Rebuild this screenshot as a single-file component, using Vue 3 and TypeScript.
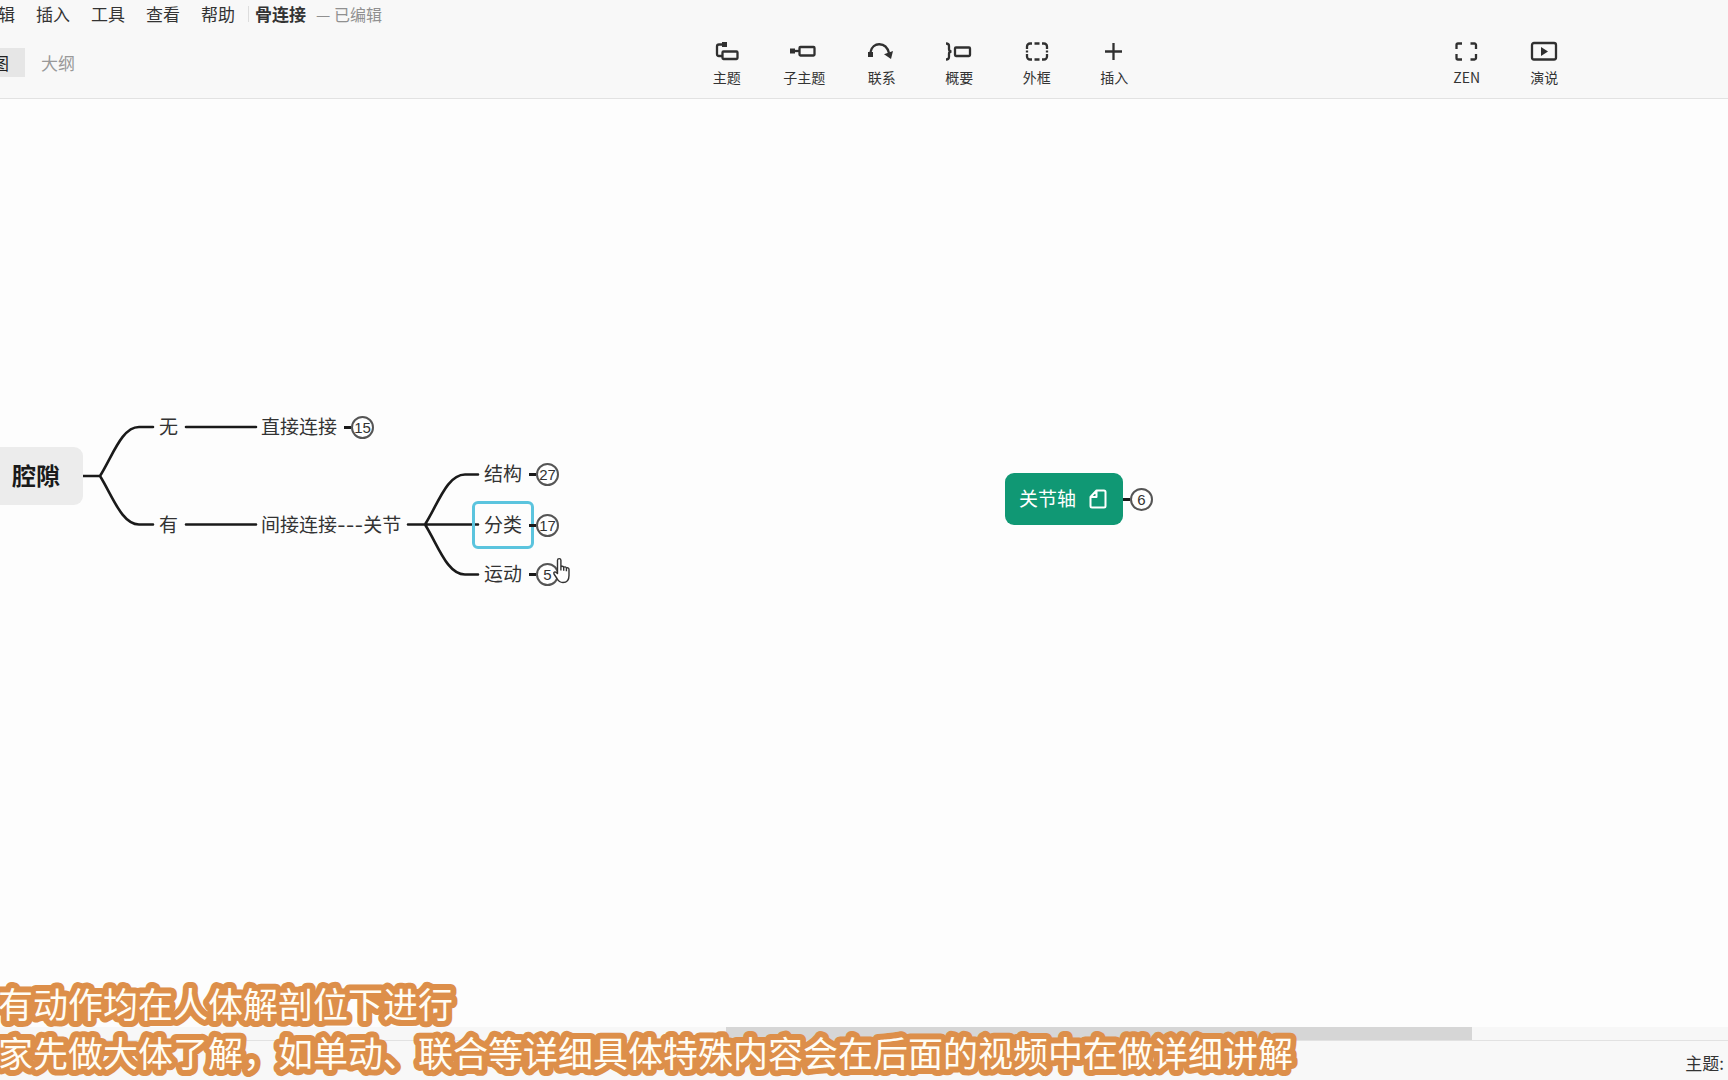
<script setup lang="ts">
interface Topic {
  text: string
  x: number
  y: number
  count?: number
  selected?: boolean
}

const menus: string[] = ['辑', '插入', '工具', '查看', '帮助']

// x is the left edge of the text, y the vertical centre, both in canvas pixels
const topics: Topic[] = [
  { text: '无', x: 159, y: 328 },
  { text: '直接连接', x: 261, y: 328, count: 15 },
  { text: '有', x: 159, y: 426 },
  { text: '间接连接---关节', x: 261, y: 426 },
  { text: '结构', x: 484, y: 375, count: 27 },
  { text: '分类', x: 484, y: 426, count: 17, selected: true },
  { text: '运动', x: 484, y: 475, count: 5 },
]

const captions: string[] = [
  '有动作均在人体解剖位下进行',
  '家先做大体了解，如单动、联合等详细具体特殊内容会在后面的视频中在做详细讲解',
]
</script>

<template>
  <div class="app">
    <header class="header">
      <nav class="menubar">
        <button v-for="m in menus" :key="m" type="button" class="menu">{{ m }}</button>
        <span class="divider"></span>
        <h1 class="title">骨连接</h1>
        <span class="state">— 已编辑</span>
      </nav>
      <div class="tools">
        <div class="tabs">
          <button type="button" class="tab active">图</button>
          <button type="button" class="tab">大纲</button>
        </div>
        <div class="group main-group">
          <button type="button" class="tool">
            <svg viewBox="0 0 32 24"><rect class="solid" x="11" y="2" width="5" height="5" /><path d="M12 4.500H8a2 2 0 0 0-2 2V14a2 2 0 0 0 2 2h3" /><rect x="11.500" y="11.500" width="15" height="7.500" rx="1" /></svg>
            <span>主题</span>
          </button>
          <button type="button" class="tool">
            <svg viewBox="0 0 32 24"><rect class="solid" x="2" y="8.500" width="5" height="5" /><path d="M6 11h5" /><rect x="11.500" y="7" width="15" height="8.500" rx="1" /></svg>
            <span>子主题</span>
          </button>
          <button type="button" class="tool">
            <svg viewBox="0 0 32 24"><rect class="solid" x="2" y="12" width="5" height="5" /><path d="M4.500 12C6.500 1.500 20 1.500 23 13" /><path class="solid" d="M18 14.300 27 11 25 19Z" /></svg>
            <span>联系</span>
          </button>
          <button type="button" class="tool">
            <svg viewBox="0 0 32 24"><path d="M3 3.500c2.500 0 3 .8 3 2.500v3c0 1.500.8 2.500 2.500 2.500-1.700 0-2.500 1-2.500 2.500v3c0 1.700-.5 2.500-3 2.500" /><rect x="12" y="7.500" width="15" height="8.500" rx="1" /></svg>
            <span>概要</span>
          </button>
          <button type="button" class="tool">
            <svg viewBox="0 0 32 24"><path d="M11 3.500H9a3 3 0 0 0-3 3V9M21 3.500h2a3 3 0 0 1 3 3V9M11 19.500H9a3 3 0 0 1-3-3V14M21 19.500h2a3 3 0 0 0 3-3V14M13.500 3.500h5M13.500 19.500h5M6 10.500v2M26 10.500v2" /></svg>
            <span>外框</span>
          </button>
          <button type="button" class="tool">
            <svg viewBox="0 0 32 24"><path d="M7 11.500h17M15.500 3v17" /></svg>
            <span>插入</span>
          </button>
        </div>
        <div class="group side-group">
          <button type="button" class="tool">
            <svg viewBox="0 0 32 24"><path d="M11 3.500H7A1.500 1.500 0 0 0 5.500 5v4M19.500 3.500h4A1.500 1.500 0 0 1 25 5v4M11 19.500H7A1.500 1.500 0 0 1 5.500 18v-4M19.500 19.500h4a1.500 1.500 0 0 0 1.500-1.500v-4" /></svg>
            <span>ZEN</span>
          </button>
          <button type="button" class="tool">
            <svg viewBox="0 0 32 24"><rect x="4" y="3" width="24" height="16.500" rx="2" /><path class="solid" d="M13 7v9l7-4.500z" /></svg>
            <span>演说</span>
          </button>
        </div>
      </div>
    </header>

    <main class="canvas">
      <svg class="links" width="1200" height="600" viewBox="0 0 1200 600">
        <path d="M83 377H100C113 356 122 328 139 328H153M100 377C113 398 122 425.500 139 425.500H153" />
        <path d="M186 328H256M186 425.500H256" />
        <path d="M408 425.500H425C438 405 447 375.500 465 375.500H478M425 425.500C438 446 447 475.500 465 475.500H478M425 425.500H478" />
      </svg>
      <div class="topic root">腔隙</div>
      <div
        v-for="t in topics"
        :key="t.text"
        class="topic branch"
        :class="{ selected: t.selected }"
        :style="{ left: t.x + 'px', top: t.y + 'px' }"
      >
        <span>{{ t.text }}</span>
        <button v-if="t.count" type="button" class="count">{{ t.count }}</button>
      </div>
      <div class="topic floating">
        <span>关节轴</span>
        <svg class="note" viewBox="0 0 18 20"><path d="M7.500 1.500H15a1.500 1.500 0 0 1 1.500 1.500V17a1.500 1.500 0 0 1-1.500 1.500H3A1.500 1.500 0 0 1 1.500 17V8ZM7.500 1.500V8H1.500" /></svg>
        <button type="button" class="count">6</button>
      </div>
      <svg class="cursor" viewBox="0 0 20 28"><path d="M5.500 16.500V3.300a1.700 1.700 0 0 1 3.400 0V10c.4-1.200 2.600-1 2.800.5.6-1 2.600-.8 2.700.8.700-.9 2.600-.6 2.600 1.200v6c0 3.500-1.700 7-6 7-3.500 0-4.800-1.700-6-4L2 17c-.9-1.700 1-2.700 2.100-1.600ZM8.900 10v3.500M11.700 10.800v3M14.400 11.500v2.700" /></svg>
    </main>

    <div class="scrollbar"><div class="thumb"></div></div>
    <footer class="status">主题:</footer>

    <svg class="captions" width="1320" height="108" viewBox="0 0 1320 108">
      <text v-for="(c, i) in captions" :key="c" x="-2" :y="46 + i * 49">{{ c }}</text>
    </svg>
  </div>
</template>

<style>
body {
  margin: 0;
}
</style>

<style scoped>
.app {
  position: relative;
  display: flex;
  flex-direction: column;
  height: 100vh;
  overflow: hidden;
  background: #fdfdfd;
  color: #333;
  font-family: "Noto Sans CJK SC", sans-serif;
}
button {
  margin: 0;
  padding: 0;
  border: 0;
  background: none;
  color: inherit;
  font-family: inherit;
  white-space: nowrap;
}
.header {
  background: #f8f8f8;
  border-bottom: 1px solid #e2e2e2;
}
.menubar {
  display: flex;
  align-items: center;
  height: 28px;
  margin-bottom: 2px;
  margin-left: -2px;
}
.menu {
  margin-right: 21px;
  font-size: 17px;
  line-height: 24px;
}
.divider {
  width: 1px;
  height: 16px;
  margin-right: 6px;
  margin-left: -8px;
  background: #ddd;
}
.title {
  margin: 0 10px 0 0;
  font-size: 17px;
  line-height: 24px;
}
.state {
  color: #909090;
  font-size: 16px;
  line-height: 24px;
}
.tools {
  display: grid;
  grid-template-columns: 688fr 465px 275fr 155px 145fr;
  height: 68px;
}
.tabs {
  display: flex;
  align-items: flex-start;
  padding-top: 18px;
  margin-left: -24px;
}
.tab {
  height: 29px;
  padding: 0 16px;
  color: #999;
  font-size: 17px;
  line-height: 29px;
}
.tab.active {
  background: #e6e6e6;
  color: #222;
}
.group {
  display: flex;
}
.side-group {
  grid-column: 4;
}
.tool {
  display: flex;
  flex: 1;
  flex-direction: column;
  align-items: center;
  gap: 3px;
  padding-top: 10px;
  font-size: 14px;
  line-height: 20px;
}
.tool svg {
  width: 32px;
  height: 24px;
  fill: none;
  stroke: #303030;
  stroke-width: 2.3;
}
.tool .solid {
  fill: #303030;
  stroke: none;
}
.canvas {
  position: relative;
  flex: 1;
  overflow: hidden;
}
.links {
  position: absolute;
  top: 0;
  left: 0;
  fill: none;
  stroke: #1a1a1a;
  stroke-width: 2.6;
  stroke-linecap: round;
}
.topic {
  position: absolute;
  display: flex;
  align-items: center;
  font-size: 19px;
  line-height: 28px;
  white-space: nowrap;
}
.root {
  top: 348px;
  left: -12px;
  box-sizing: border-box;
  height: 58px;
  padding: 0 23px 2px 24px;
  border-radius: 9px;
  background: #ececec;
  color: #1a1a1a;
  font-size: 24px;
  font-weight: 700;
}
.branch {
  height: 48px;
  font-family: Inter, "Noto Sans CJK SC", sans-serif;
  transform: translateY(-50%);
}
.branch span {
  padding-top: 1px;
}
.selected::before {
  content: "";
  position: absolute;
  top: 0;
  left: -12px;
  box-sizing: border-box;
  width: 62px;
  height: 48px;
  border: 3px solid #5bc4de;
  border-radius: 6px;
}
.count {
  position: relative;
  box-sizing: border-box;
  width: 23px;
  height: 23px;
  margin-left: 14px;
  border: 2px solid #555;
  border-radius: 50%;
  background: #fff;
  color: #333;
  font-family: "Liberation Sans", sans-serif;
  font-size: 15px;
  line-height: 19px;
}
.branch .count,
.floating .count {
  display: flex;
  align-items: center;
  justify-content: center;
}
.count::before {
  content: "";
  position: absolute;
  top: 8px;
  right: 21px;
  width: 7px;
  height: 3px;
  background: #1a1a1a;
}
.floating {
  top: 374px;
  left: 1005px;
  box-sizing: border-box;
  width: 118px;
  height: 52px;
  padding-left: 14px;
  border-radius: 9px;
  background: #109874;
  color: #fff;
}
.floating span {
  padding-bottom: 2px;
}
.note {
  flex: none;
  width: 18px;
  height: 20px;
  margin-left: 13px;
  fill: none;
  stroke: #fff;
  stroke-width: 2;
  stroke-linejoin: round;
}
.floating .count {
  flex: none;
  margin-left: 23px;
}
.cursor {
  position: absolute;
  top: 458px;
  left: 552px;
  width: 20px;
  height: 28px;
  fill: #fff;
  stroke: #333;
  stroke-width: 1.4;
  stroke-linejoin: round;
}
.scrollbar {
  height: 13px;
  background: #f7f7f7;
}
.thumb {
  width: 43.2%;
  height: 100%;
  margin-left: 42%;
  background: #d6d6d6;
}
.status {
  height: 39px;
  padding-right: 4px;
  border-top: 1px solid #e2e2e2;
  background: #f8f8f8;
  font-size: 17px;
  line-height: 44px;
  text-align: right;
}
.captions {
  position: absolute;
  bottom: 0;
  left: 0;
  fill: #fffdf5;
  font-size: 35px;
  stroke: #dd8f4a;
  stroke-width: 12px;
  stroke-linejoin: round;
  paint-order: stroke fill;
}
</style>
